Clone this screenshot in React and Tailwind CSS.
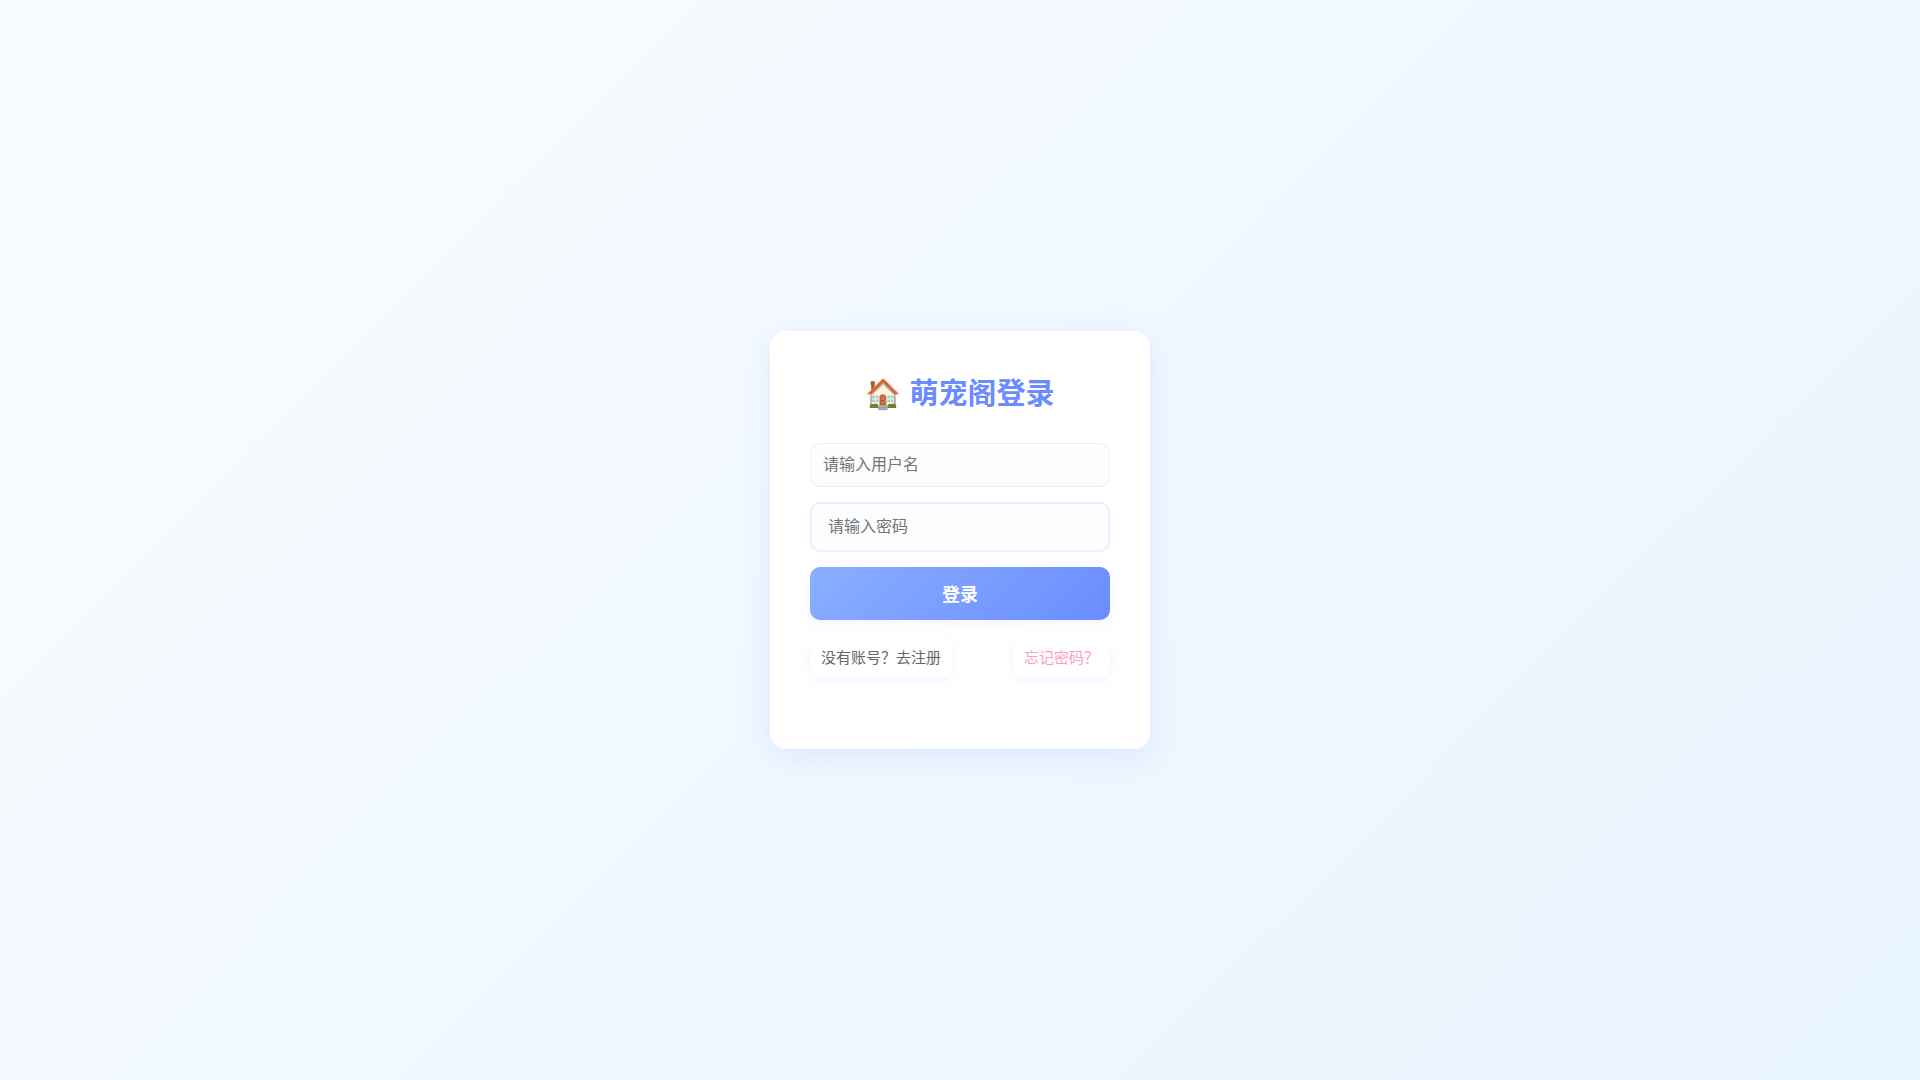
import React, { useState } from "react";

const LoginPage = () => {
  const [form, setForm] = useState({ username: "", password: "" });

  const handleChange = (e) => {
    setForm({ ...form, [e.target.name]: e.target.value });
  };

  const handleSubmit = (e) => {
    e.preventDefault();
  };

  return (
    <div className="min-h-screen flex items-center justify-center bg-[linear-gradient(135deg,#f9fcff,#e8f4ff)] font-['Liberation_Sans','Noto_Sans_CJK_SC',sans-serif]">
      <div className="w-full max-w-[380px] bg-white rounded-2xl px-10 pt-10 pb-18 shadow-[0_8px_32px_rgba(107,140,255,0.15)]">
        {/* Title */}
        <h1 className="mb-[26px] text-center text-[29px] leading-[46px] font-bold text-[#6b8cff]">🏠 萌宠阁登录</h1>

        {/* Form */}
        <form onSubmit={handleSubmit} className="flex flex-col gap-[15px]">
          <input
            type="text"
            name="username"
            aria-label="用户名"
            placeholder="请输入用户名"
            value={form.username}
            onChange={handleChange}
            className="h-11 w-full rounded-[10px] border border-[#e6f0ff] bg-[#fbfdff] px-3 text-base placeholder:text-[#757575]"
          />
          <input
            type="password"
            name="password"
            aria-label="密码"
            placeholder="请输入密码"
            value={form.password}
            onChange={handleChange}
            className="h-[50px] w-full rounded-[10px] border-2 border-[#e6f0ff] bg-[#fbfdff] px-4 text-base placeholder:text-[#757575]"
          />
          <button
            type="submit"
            className="h-[53px] w-full rounded-[10px] bg-[linear-gradient(135deg,#8aafff,#6b8cff)] pt-0.5 text-lg font-bold text-white shadow-[0_4px_12px_rgba(107,140,255,0.08)]"
          >
            登录
          </button>

          {/* Links */}
          <div className="flex justify-between text-[15px] leading-6">
            <a href="#register" className="rounded-[10px] bg-white px-[11px] pt-[11px] pb-[7px] text-[#666] shadow-[0_4px_12px_rgba(107,140,255,0.08)]">
              没有账号？去注册
            </a>
            <a href="#forgot" className="rounded-[10px] bg-white px-[11px] pt-[11px] pb-[7px] text-[#ff9eb5] shadow-[0_4px_12px_rgba(107,140,255,0.08)]">
              忘记密码？
            </a>
          </div>
        </form>
      </div>
    </div>
  );
};

export default LoginPage;
